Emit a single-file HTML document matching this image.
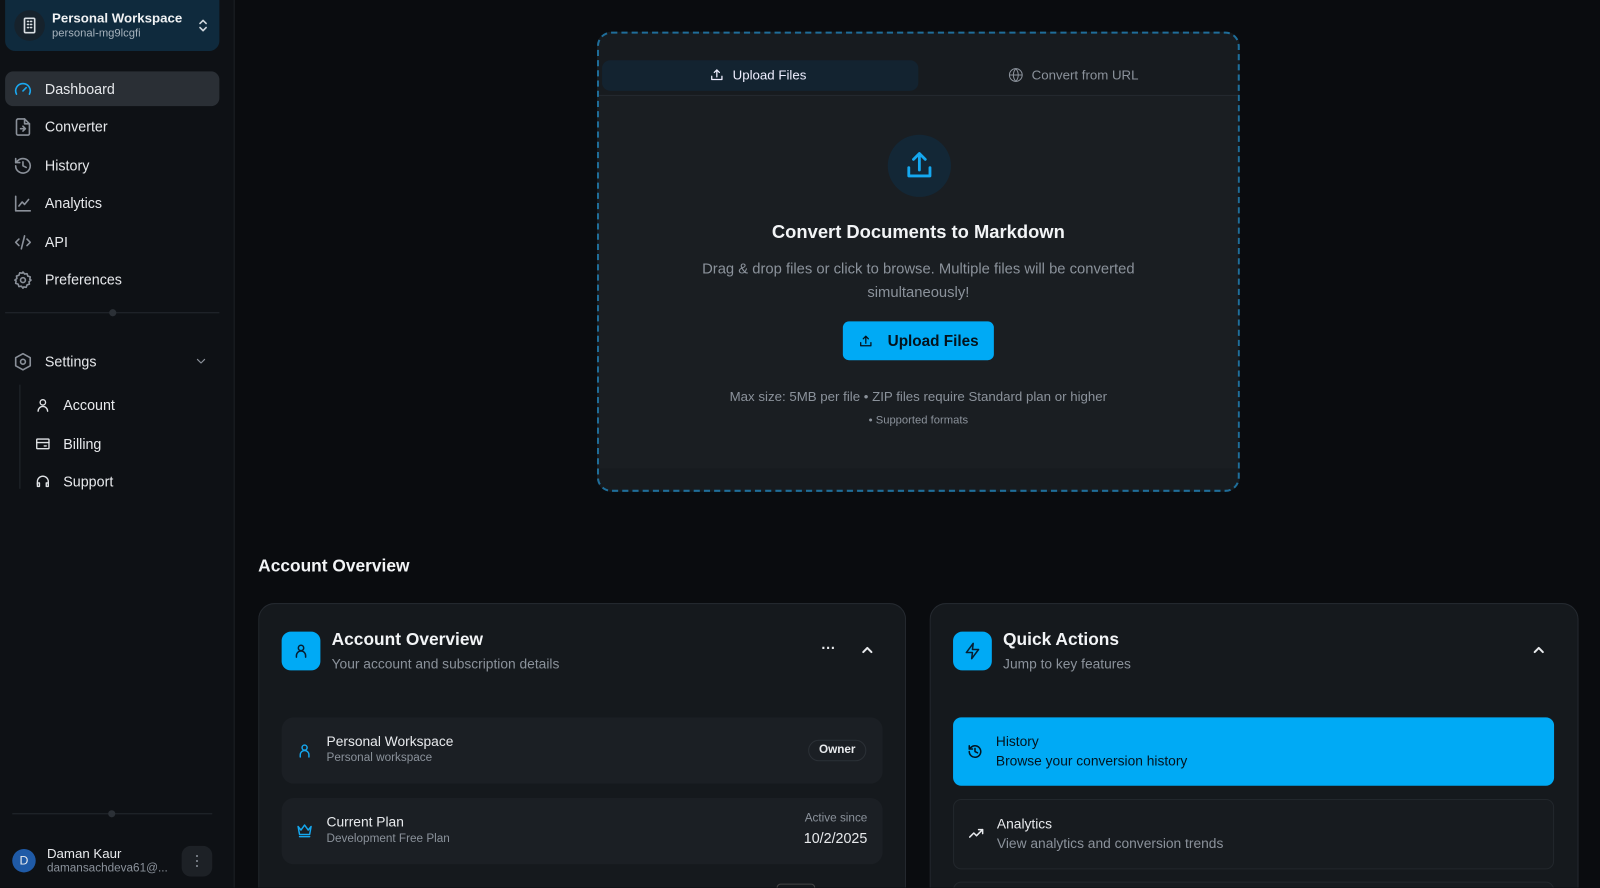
<!DOCTYPE html>
<html style="overflow:hidden;width:1600px;height:888px"><head><meta charset="utf-8"><style>
*{box-sizing:border-box;margin:0;padding:0}
html,body{overflow:hidden}
body{width:1600px;height:888px;background:#0a0c0f;font-family:"Liberation Sans",sans-serif;color:#e8eaed}
#outer{position:relative;width:1600px;height:888px;overflow:hidden}
#wrap{position:absolute;left:0;top:0;width:1568px;height:870px;overflow:hidden;transform:scale(1.0204);transform-origin:0 0}
.abs{position:absolute}
svg{fill:none;stroke:currentColor;stroke-width:2;stroke-linecap:round;stroke-linejoin:round}
#side{left:0;top:0;width:230px;height:870px;background:#0e1115;border-right:1px solid #1d2126}
.nav{position:absolute;left:5px;width:210px;height:34px;display:flex;align-items:center;font-size:14px;color:#e6e8eb}
.nav svg{width:19px;height:19px;margin:0 12px 0 8px;color:#8a9099}
.sub{position:absolute;left:34px;display:flex;align-items:center;font-size:14px}
.sub svg{width:16px;height:16px;margin-right:12px;color:#e0e3e6}
.card{border:1px solid #252a30;border-bottom:none;border-radius:16px 16px 0 0;background:#15191d;overflow:hidden}
.row{position:absolute;border-radius:12px;background:#1b1f24}
.muted{color:#8b929b}
</style></head><body><div id="outer"><div id="wrap">
<div id="side" class="abs">
 <div class="abs" style="left:5px;top:0;width:210px;height:50px;background:#0f2a3d;border-radius:0 0 10px 10px"></div>
 <div class="abs" style="left:14px;top:10px;width:30px;height:30px;border-radius:50%;background:#16222c"></div>
 <svg class="abs" style="left:22px;top:17px;width:14px;height:16px;color:#d8dde2;stroke-width:1.6" viewBox="0 0 14 16"><rect x="2" y="1" width="10" height="14" rx="1"/><path d="M5 4h1M8 4h1M5 7h1M8 7h1M5 10h1M8 10h1"/></svg>
 <div class="abs" style="left:51px;top:10px;font-size:13px;font-weight:bold;color:#f0f2f4">Personal Workspace</div>
 <div class="abs muted" style="left:51px;top:27px;font-size:11px;color:#a7b3bd">personal-mg9lcgfi</div>
 <svg class="abs" style="left:193px;top:17px;width:12px;height:16px;color:#cfd6dc;stroke-width:1.6" viewBox="0 0 12 16"><path d="M3 6l3-3 3 3M3 10l3 3 3-3"/></svg>

 <div class="nav" style="top:70px;background:#2a2f35;border-radius:8px"><svg viewBox="0 0 24 24" style="color:#1aa7ef"><path d="M4 18a9 9 0 1 1 16 0"/><path d="M12 14l4-4"/></svg>Dashboard</div>
 <div class="nav" style="top:107px"><svg viewBox="0 0 24 24"><path d="M14 2H6a2 2 0 0 0-2 2v16a2 2 0 0 0 2 2h12a2 2 0 0 0 2-2V8z"/><path d="M14 2v6h6M9 14h6M12 11l3 3-3 3"/></svg>Converter</div>
 <div class="nav" style="top:145px"><svg viewBox="0 0 24 24"><path d="M3 12a9 9 0 1 0 3-6.7L3 8"/><path d="M3 3v5h5M12 7v5l4 2"/></svg>History</div>
 <div class="nav" style="top:182px"><svg viewBox="0 0 24 24"><path d="M3 3v18h18"/><path d="M7 15l4-5 3 3 5-6"/></svg>Analytics</div>
 <div class="nav" style="top:220px"><svg viewBox="0 0 24 24"><path d="M7 8l-4 4 4 4M17 8l4 4-4 4M14 4l-4 16"/></svg>API</div>
 <div class="nav" style="top:257px"><svg viewBox="0 0 24 24"><circle cx="12" cy="12" r="3"/><path d="M12 2l2 2.5 3-.5 1 3 3 1-.5 3L22 12l-2.5 2 .5 3-3 1-1 3-3-.5L12 22l-2-2.5-3 .5-1-3-3-1 .5-3L2 12l2.5-2-.5-3 3-1 1-3 3 .5z"/></svg>Preferences</div>
 <div class="abs" style="left:5px;top:306px;width:210px;height:1px;background:#23282e"></div>
 <div class="abs" style="left:107px;top:303px;width:7px;height:7px;border-radius:50%;background:#2b3036"></div>
 <div class="nav" style="top:337px"><svg viewBox="0 0 24 24"><path d="M12 2l9 5v10l-9 5-9-5V7z"/><circle cx="12" cy="12" r="3"/></svg>Settings<svg viewBox="0 0 24 24" style="position:absolute;left:185px;width:14px;height:14px;margin:0"><path d="M6 9l6 6 6-6"/></svg></div>
 <div class="abs" style="left:19px;top:377px;width:1px;height:102px;background:#23282e"></div>
 <div class="sub" style="top:389px"><svg viewBox="0 0 24 24"><circle cx="12" cy="8" r="4"/><path d="M5 21a7 7 0 0 1 14 0"/></svg>Account</div>
 <div class="sub" style="top:427px"><svg viewBox="0 0 24 24"><rect x="3" y="5" width="18" height="14" rx="1"/><path d="M3 10h18M14 15h3"/></svg>Billing</div>
 <div class="sub" style="top:464px"><svg viewBox="0 0 24 24"><path d="M4 16v-4a8 8 0 0 1 16 0v4"/><path d="M4 14h3v5H4zM17 14h3v5h-3z"/></svg>Support</div>
 <div class="abs" style="left:12px;top:797px;width:196px;height:1px;background:#23282e"></div>
 <div class="abs" style="left:106px;top:794px;width:7px;height:7px;border-radius:50%;background:#2b3036"></div>
 <div class="abs" style="left:12px;top:832px;width:23px;height:23px;border-radius:50%;background:#1f5aa6;font-size:12px;text-align:center;line-height:23px">D</div>
 <div class="abs" style="left:46px;top:829px;font-size:13px">Daman Kaur</div>
 <div class="abs muted" style="left:46px;top:845px;font-size:11.5px">damansachdeva61@...</div>
 <div class="abs" style="left:178px;top:829px;width:30px;height:30px;border-radius:9px;background:#1d2126;color:#8b929b;text-align:center;font-size:14px;line-height:28px">⋮</div>
</div>

<div class="abs" style="left:585px;top:31px;width:630px;height:451px;border:2px dashed #1f6e9a;border-radius:14px;background:#171b1f;overflow:hidden">
 <div class="abs" style="left:3px;top:26px;width:310px;height:30px;border-radius:8px;background:#132330"></div>
 <div class="abs" style="left:108px;top:33px;font-size:13px;display:flex;align-items:center;color:#eef"><svg viewBox="0 0 24 24" style="width:15px;height:15px;margin-right:8px"><path d="M12 15V4M8 8l4-4 4 4M4 14v5h16v-5"/></svg>Upload Files</div>
 <div class="abs muted" style="left:401px;top:33px;font-size:13px;display:flex;align-items:center"><svg viewBox="0 0 24 24" style="width:15px;height:15px;margin-right:8px;stroke-width:1.6"><circle cx="12" cy="12" r="10"/><path d="M2 12h20M12 2a15 15 0 0 1 0 20M12 2a15 15 0 0 0 0 20"/></svg>Convert from URL</div>
 <div class="abs" style="left:0;top:60px;width:630px;height:1px;background:#262b31"></div>
 <div class="abs" style="left:0;top:61px;width:630px;height:365px;background:#1a1e22"></div>
 <div class="abs" style="left:283px;top:99px;width:62px;height:61px;border-radius:50%;background:#132736"></div>
 <svg class="abs" style="left:300px;top:114px;width:28px;height:30px;color:#15a8f0;stroke-width:2.4" viewBox="0 0 24 26"><path d="M12 17V3M7 8l5-5 5 5M3 15v7h18v-7"/></svg>
 <div class="abs" style="left:0;top:184px;width:626px;text-align:center;font-size:18px;font-weight:bold;color:#f2f4f6">Convert Documents to Markdown</div>
 <div class="abs muted" style="left:80px;top:220px;width:466px;text-align:center;font-size:14.5px;line-height:23px">Drag &amp; drop files or click to browse. Multiple files will be converted simultaneously!</div>
 <div class="abs" style="left:239px;top:282px;width:148px;height:38px;border-radius:6px;background:#00aaf5;color:#04121c;font-weight:bold;font-size:15px;display:flex;align-items:center;justify-content:center"><svg viewBox="0 0 24 24" style="width:15px;height:15px;margin-right:14px"><path d="M12 15V4M8 8l4-4 4 4M4 14v5h16v-5"/></svg>Upload Files</div>
 <div class="abs muted" style="left:0;top:348px;width:626px;text-align:center;font-size:13px">Max size: 5MB per file • ZIP files require Standard plan or higher</div>
 <div class="abs muted" style="left:0;top:373px;width:626px;text-align:center;font-size:11px">• Supported formats</div>
</div>

<div class="abs" style="left:253px;top:545px;font-size:17px;font-weight:bold;color:#f2f4f6">Account Overview</div>

<div class="abs card" style="left:253px;top:591px;width:635px;height:279px">
 <div class="abs" style="left:22px;top:27px;width:38px;height:38px;border-radius:9px;background:#00aaf5;color:#062033"><svg viewBox="0 0 24 24" style="width:18px;height:18px;margin:10px"><circle cx="12" cy="8" r="3.5"/><path d="M6 20v-2a6 6 0 0 1 12 0v2"/></svg></div>
 <div class="abs" style="left:71px;top:25px;font-size:17px;font-weight:bold;color:#f2f4f6">Account Overview</div>
 <div class="abs muted" style="left:71px;top:51px;font-size:13.5px">Your account and subscription details</div>
 <div class="abs" style="left:551px;top:35px;font-size:14px;font-weight:bold">···</div>
 <svg class="abs" style="left:590px;top:40px;width:12px;height:10px" viewBox="0 0 12 10"><path d="M2 7l4-4 4 4"/></svg>
 <div class="row" style="left:22px;top:111px;width:589px;height:65px">
  <svg class="abs" style="left:14px;top:24px;width:17px;height:17px;color:#15a8f0" viewBox="0 0 24 24"><circle cx="12" cy="8" r="3.5"/><path d="M6 21v-3a6 6 0 0 1 12 0v3"/></svg>
  <div class="abs" style="left:44px;top:16px;font-size:13.5px">Personal Workspace</div>
  <div class="abs muted" style="left:44px;top:34px;font-size:11.5px">Personal workspace</div>
  <div class="abs" style="left:516px;top:22px;width:57px;height:21px;border:1px solid #2b3036;border-radius:11px;font-size:11.5px;font-weight:bold;text-align:center;line-height:19px">Owner</div>
 </div>
 <div class="row" style="left:22px;top:190px;width:589px;height:65px">
  <svg class="abs" style="left:14px;top:23px;width:17px;height:17px;color:#15a8f0" viewBox="0 0 24 24"><path d="M3 7l4 5 5-7 5 7 4-5-2 11H5zM5 21h14"/></svg>
  <div class="abs" style="left:44px;top:16px;font-size:13.5px">Current Plan</div>
  <div class="abs muted" style="left:44px;top:34px;font-size:11.5px">Development Free Plan</div>
  <div class="abs muted" style="right:15px;top:14px;font-size:11.5px">Active since</div>
  <div class="abs" style="right:15px;top:31px;font-size:14px">10/2/2025</div>
 </div>
 <div class="abs" style="left:507px;top:274px;width:38px;height:20px;border:1px solid #444;border-radius:4px"></div>
</div>

<div class="abs card" style="left:911px;top:591px;width:636px;height:279px">
 <div class="abs" style="left:22px;top:27px;width:38px;height:38px;border-radius:9px;background:#00aaf5;color:#062033"><svg viewBox="0 0 24 24" style="width:18px;height:18px;margin:10px"><path d="M13 2L4 14h8l-1 8 9-12h-8z"/></svg></div>
 <div class="abs" style="left:71px;top:25px;font-size:17px;font-weight:bold;color:#f2f4f6">Quick Actions</div>
 <div class="abs muted" style="left:71px;top:51px;font-size:13.5px">Jump to key features</div>
 <svg class="abs" style="left:590px;top:40px;width:12px;height:10px" viewBox="0 0 12 10"><path d="M2 7l4-4 4 4"/></svg>
 <div class="abs" style="left:22px;top:111px;width:589px;height:67px;border-radius:8px;background:#00aaf5;color:#03141f">
  <svg class="abs" style="left:14px;top:26px;width:15px;height:15px;stroke-width:2.4" viewBox="0 0 24 24"><path d="M3 12a9 9 0 1 0 3-6.7L3 8"/><path d="M3 3v5h5M12 7v5l4 2"/></svg>
  <div class="abs" style="left:42px;top:16px;font-size:13.5px">History</div>
  <div class="abs" style="left:42px;top:35px;font-size:13.5px">Browse your conversion history</div>
 </div>
 <div class="abs" style="left:22px;top:191px;width:589px;height:69px;border-radius:8px;border:1px solid #22272c;background:#171b1f">
  <svg class="abs" style="left:14px;top:26px;width:16px;height:14px;stroke-width:2.2" viewBox="0 0 24 20"><path d="M2 15l6-6 4 4 9-9M15 4h6v6"/></svg>
  <div class="abs" style="left:42px;top:16px;font-size:13.5px">Analytics</div>
  <div class="abs muted" style="left:42px;top:35px;font-size:13.5px">View analytics and conversion trends</div>
 </div>
 <div class="abs" style="left:22px;top:272px;width:589px;height:60px;border-radius:8px;border:1px solid #22272c;background:#171b1f"></div>
</div>
</div></div></body></html>
